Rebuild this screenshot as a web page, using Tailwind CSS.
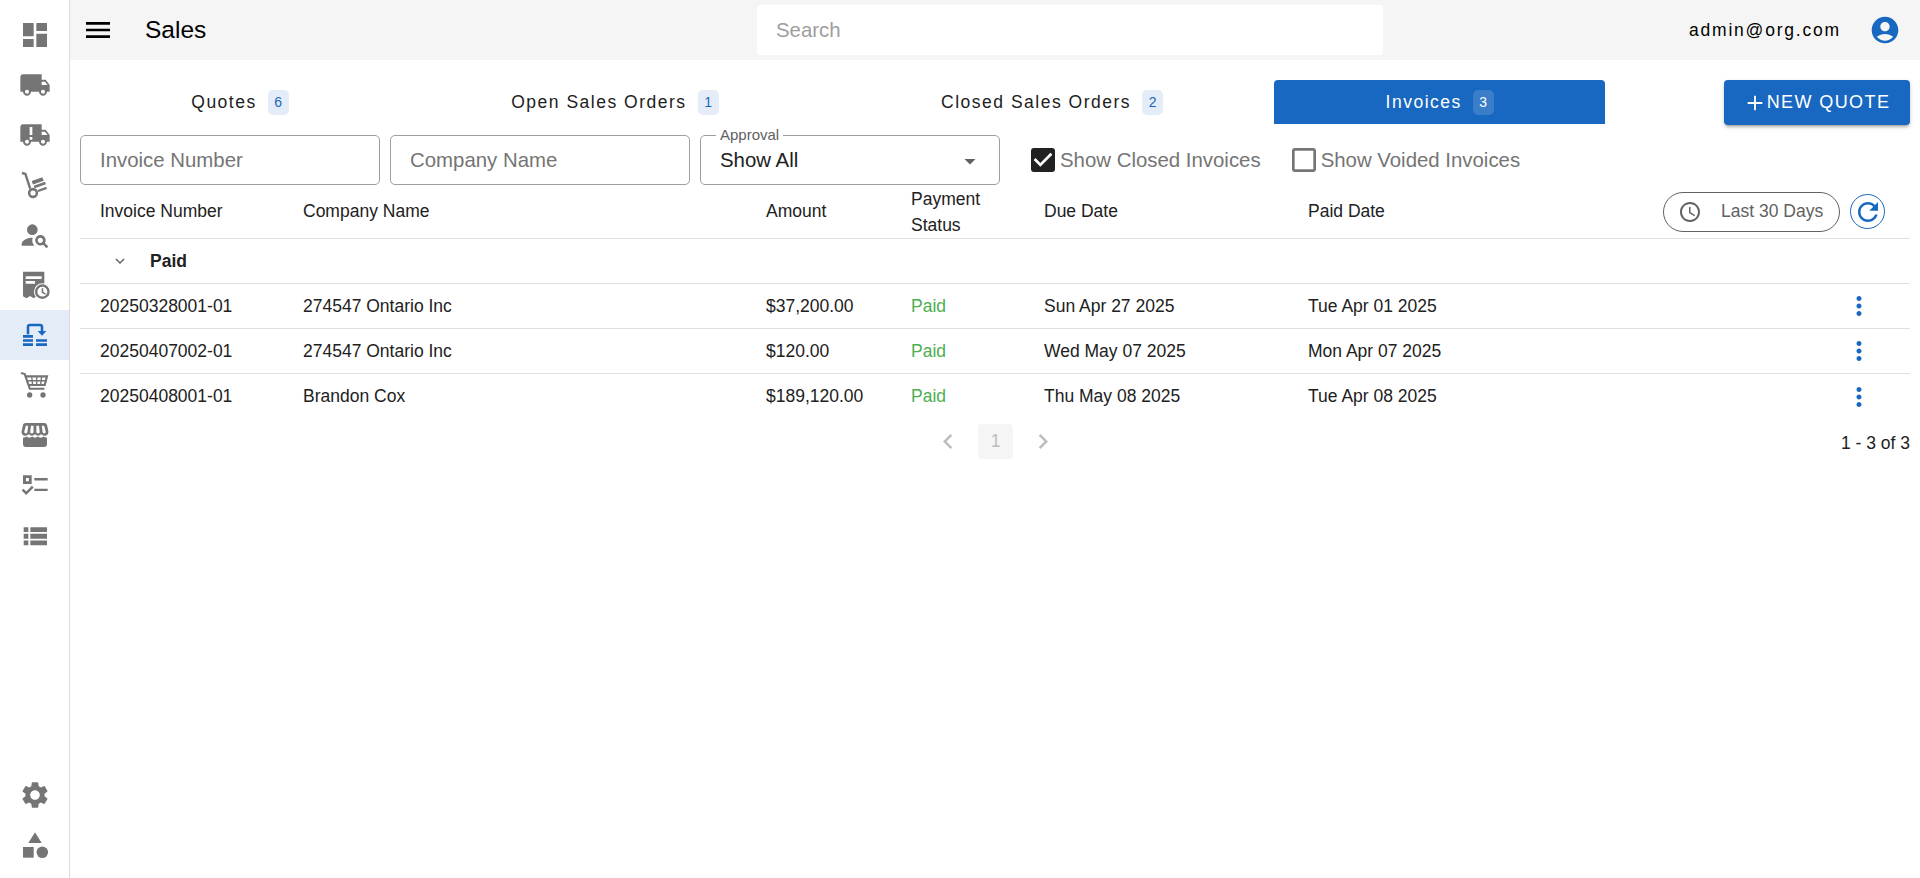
<!DOCTYPE html>
<html><head><meta charset="utf-8"><script src="https://cdn.jsdelivr.net/npm/@tailwindcss/browser@4"></script></head>
<body class="h-[878px] overflow-hidden bg-white font-['Liberation_Sans',sans-serif] text-[#212121]">
<div class="flex h-[878px]">
<nav class="w-[70px] shrink-0 border-r border-[#dcdcdc] flex flex-col justify-between pt-[10px] pb-[8px] text-[#757575]">
<div class="flex flex-col">
<div class="h-[50px] flex items-center justify-center"><svg class="w-8 h-8" viewBox="0 0 24 24" fill="currentColor"><path d="M3 13h8V3H3v10zm0 8h8v-6H3v6zm10 0h8V11h-8v10zm0-18v6h8V3h-8z"/></svg></div>
<div class="h-[50px] flex items-center justify-center"><svg class="w-8 h-8" viewBox="0 0 24 24" fill="currentColor"><path d="M20 8h-3V4H3c-1.100 0-2 .9-2 2v11h2c0 1.660 1.340 3 3 3s3-1.340 3-3h6c0 1.660 1.340 3 3 3s3-1.340 3-3h2v-5l-3-4zM6 18.500c-.83 0-1.500-.67-1.500-1.500s.67-1.500 1.500-1.500 1.500.67 1.500 1.500-.67 1.500-1.500 1.500zm13.500-9l1.960 2.500H17V9.500h2.500zm-1.500 9c-.83 0-1.500-.67-1.500-1.500s.67-1.500 1.500-1.500 1.500.67 1.500 1.500-.67 1.500-1.500 1.500z"/></svg></div>
<div class="h-[50px] flex items-center justify-center"><svg class="w-8 h-8" viewBox="0 0 24 24" fill="currentColor"><path fill-rule="evenodd" d="M20 8h-3V4H3c-1.100 0-2 .9-2 2v11h2c0 1.660 1.340 3 3 3s3-1.340 3-3h6c0 1.660 1.340 3 3 3s3-1.340 3-3h2v-5l-3-4zM6 18.500c-.83 0-1.500-.67-1.500-1.500s.67-1.500 1.500-1.500 1.500.67 1.500 1.500-.67 1.500-1.500 1.500zm13.500-9l1.960 2.500H17V9.500h2.500zm-1.500 9c-.83 0-1.500-.67-1.500-1.500s.67-1.500 1.500-1.500 1.500.67 1.500 1.500-.67 1.500-1.500 1.500zM8 6v6h2V6H8zm0 7.500v2h2v-2H8z"/></svg></div>
<div class="h-[50px] flex items-center justify-center"><svg class="w-8 h-8" viewBox="0 0 24 24" fill="currentColor"><path d="M2.200 3l2.600.7 3.600 11" fill="none" stroke="currentColor" stroke-width="1.800"/><circle cx="10.500" cy="18" r="2.900" fill="none" stroke="currentColor" stroke-width="1.900"/><path d="M14.500 17.300l6.500-2.300-.6-1.600-6.500 2.300zM9.500 9l8-2.900 1 2.700-8 2.900zM11 12.500l8.500-3 .7 2-8.500 3z"/></svg></div>
<div class="h-[50px] flex items-center justify-center"><svg class="w-8 h-8" viewBox="0 0 24 24" fill="currentColor"><circle cx="10" cy="8" r="4"/><path d="M10.350 14.010C7.620 13.910 2 15.270 2 19v1h9.540c-2.470-2.760-1.230-5.890-1.190-5.990z"/><path d="M19.430 18.020c.47-.8.7-1.770.51-2.800-.29-1.630-1.650-2.930-3.290-3.140-2.600-.33-4.790 1.860-4.460 4.460.21 1.640 1.510 3 3.140 3.290 1.030.19 2-.04 2.800-.51L20.590 22 22 20.590l-2.570-2.570zM16 18c-1.100 0-2-.9-2-2s.9-2 2-2 2 .9 2 2-.9 2-2 2z"/></svg></div>
<div class="h-[50px] flex items-center justify-center"><svg class="w-8 h-8" viewBox="0 0 24 24" fill="currentColor"><path fill-rule="evenodd" d="M3 2h16v19l-2.700 1-2.700-1.700-2.700 1.700-2.600-1.700-2.700 1.700L3 20.500zM5 5.500v2h12v-2zM5 9v2h7V9z"/><circle cx="17.500" cy="17" r="6.300" fill="#fff"/><path fill-rule="evenodd" d="M17.500 11.500a5.500 5.500 0 1 0 0 11 5.500 5.500 0 0 0 0-11zm0 1.800a3.700 3.700 0 1 1 0 7.400 3.700 3.700 0 0 1 0-7.400z"/><path d="M17 14.500h1.200v2.700l2 1.200-.6 1-2.600-1.600z"/></svg></div>
<div class="h-[50px] flex items-center justify-center bg-[#e3ecf7] w-[69px] text-[#1867c0]"><svg class="w-8 h-8" viewBox="0 0 24 24" fill="currentColor"><path d="M3 12h7.500v2H3zM3 15.100h7.500v2H3zM3 18.200h7.500v2H3zM12.750 15.100H21v2h-8.250zM12.750 18.200H21v2h-8.250z"/><path d="M6.750 11.500V6a1.500 1.500 0 0 1 1.500-1.500h7.500a1.500 1.500 0 0 1 1.500 1.500v3.500" fill="none" stroke="currentColor" stroke-width="1.900"/><path d="M14 9h6.500l-3.250 3.600z"/></svg></div>
<div class="h-[50px] flex items-center justify-center"><svg class="w-8 h-8" viewBox="0 0 24 24" fill="none" stroke="currentColor" stroke-width="1.600"><path d="M1.500 3l2.800 .8 3.800 11h11"/><path d="M5 5.500h16l-1.700 6.500H7" /><path d="M5.800 8.800h14.500M9.500 5.500l.7 6.500M13.300 5.500v6.500M17 5.500l-.8 6.500" stroke-width="1"/><circle cx="8" cy="19.500" r="2" fill="currentColor" stroke="none"/><circle cx="18" cy="19.500" r="2" fill="currentColor" stroke="none"/></svg></div>
<div class="h-[50px] flex items-center justify-center"><svg class="w-8 h-8" viewBox="0 0 24 24" fill="currentColor"><path fill-rule="evenodd" d="M5 3h14c1 0 1.800.6 2 1.500L22 9c.4 2-1 3.600-2.800 3.600-1.100 0-2-.5-2.600-1.300-.6.8-1.500 1.300-2.300 1.300-1 0-1.700-.5-2.300-1.300-.6.8-1.400 1.300-2.300 1.300-.9 0-1.700-.5-2.300-1.300-.6.8-1.500 1.300-2.600 1.300C2.900 12.600 1.600 11 2 9l1-4.500C3.200 3.600 4 3 5 3zM5.100 5L4 9.400c-.2.9.5 1.400 1.100 1.400.6 0 1.100-.5 1.200-1.100L6.900 5zM9 5l-.6 4.600c-.1.7.5 1.300 1.200 1.300.7 0 1.300-.6 1.300-1.300V5zM13 5v4.600c0 .7.6 1.300 1.300 1.300.7 0 1.300-.6 1.200-1.300L15 5zM17.100 5l.6 4.700c.1.6.6 1.100 1.200 1.100.6 0 1.300-.5 1.100-1.400L18.900 5z"/><path d="M3 14c1.200 0 1.900-.3 2.500-.8.6.5 1.500.8 2.100.8.8 0 1.800-.3 2.300-.8.6.5 1.300.8 2.100.8.8 0 1.500-.3 2.100-.8.6.5 1.500.8 2.300.8.7 0 1.500-.3 2.100-.8.6.5 1.300.8 2.500.8v5c0 1.100-.9 2-2 2H5c-1.100 0-2-.9-2-2z"/></svg></div>
<div class="h-[50px] flex items-center justify-center"><svg class="w-8 h-8 translate-y-[1px]" viewBox="0 0 24 24" fill="currentColor"><path fill-rule="evenodd" d="M3 4h6.500v6.500H3zM5.200 6v2.500h2.200V6z"/><path d="M11.500 6h10v1.800h-10zM11.500 14h10v1.800h-10zM2 15.400l1.300-1.300 2.100 2.100 4.300-4.300 1.300 1.300-5.600 5.600z"/></svg></div>
<div class="h-[50px] flex items-center justify-center"><svg class="w-8 h-8 translate-y-[1px]" viewBox="0 0 24 24" fill="currentColor"><path d="M3.500 14h3.500v-3.600H3.500zm0 5h3.500v-3.600H3.500zM3.500 9h3.500V5.400H3.500zm5 5H21v-3.600H8.500zm0 5H21v-3.600H8.500zM8.500 5.400V9H21V5.400z"/></svg></div>
</div>
<div class="flex flex-col">
<div class="h-[50px] flex items-center justify-center"><svg class="w-8 h-8" viewBox="0 0 24 24" fill="currentColor"><path d="M19.140 12.940c.04-.3.06-.61.06-.94 0-.32-.02-.64-.07-.94l2.030-1.580c.18-.14.23-.41.12-.61l-1.920-3.320c-.12-.22-.37-.29-.59-.22l-2.390.96c-.5-.38-1.030-.7-1.620-.94l-.36-2.540c-.04-.24-.24-.41-.48-.41h-3.840c-.24 0-.43.17-.47.41l-.36 2.540c-.59.24-1.130.57-1.620.94l-2.390-.96c-.22-.08-.47 0-.59.22L2.740 8.870c-.12.21-.08.47.12.61l2.030 1.580c-.05.3-.09.63-.09.94s.02.64.07.94l-2.030 1.580c-.18.14-.23.41-.12.61l1.920 3.320c.12.22.37.29.59.22l2.390-.96c.5.38 1.030.7 1.620.94l.36 2.540c.05.24.24.41.48.41h3.840c.24 0 .44-.17.47-.41l.36-2.540c.59-.24 1.130-.56 1.620-.94l2.390.96c.22.08.47 0 .59-.22l1.920-3.320c.12-.22.07-.47-.12-.61l-2.010-1.580zM12 15.600c-1.980 0-3.600-1.620-3.600-3.600s1.620-3.600 3.600-3.600 3.600 1.620 3.600 3.600-1.620 3.600-3.600 3.600z"/></svg></div>
<div class="h-[50px] flex items-center justify-center"><svg class="w-8 h-8" viewBox="0 0 24 24" fill="currentColor"><path d="M12 2.500l-5 8h10z"/><circle cx="17.500" cy="17.500" r="4.300"/><rect x="3" y="13.500" width="8" height="8"/></svg></div>
</div>
</nav>
<div class="flex-1 min-w-0 flex flex-col">
<header class="h-[60px] bg-[#f5f5f5] flex items-center relative">
<svg class="w-8 h-8 ml-[12px] text-black" viewBox="0 0 24 24" fill="currentColor"><path d="M3 18h18v-2H3v2zm0-5h18v-2H3v2zm0-7v2h18V6H3z"/></svg>
<h1 class="ml-[31px] text-[24.500px] leading-none text-black">Sales</h1>
<div class="absolute left-[687px] top-[5px] w-[626px] h-[50px] bg-white rounded-[4px] flex items-center pl-[19px] text-[20.400px] text-[#9e9e9e]">Search</div>
<div class="ml-auto text-[17.500px] tracking-[1.800px] text-black">admin@org.com</div>
<svg class="w-8 h-8 ml-[28px] mr-[19px] text-[#1867c0]" viewBox="0 0 24 24" fill="currentColor"><path d="M12 2C6.480 2 2 6.480 2 12s4.480 10 10 10 10-4.480 10-10S17.520 2 12 2zm0 4c1.930 0 3.500 1.570 3.500 3.500S13.930 13 12 13s-3.500-1.570-3.500-3.500S10.070 6 12 6zm0 14c-2.030 0-4.430-.82-6.140-2.880C7.550 15.800 9.680 15 12 15s4.450.8 6.140 2.120C16.430 19.180 14.030 20 12 20z"/></svg>
</header>
<main class="pl-[10px] pr-[10px] flex-1 flex flex-col">
<div class="flex items-start pt-[20px]">
<div class="flex w-[1525px] h-[44px] text-[17.500px] tracking-[1.500px]">
<div class="flex-auto flex items-center justify-center gap-[11px]">Quotes <span class="w-[21px] h-[25px] rounded-[5px] bg-[#e3ecf7] text-[#1867c0] text-[14px] tracking-normal flex items-center justify-center">6</span></div>
<div class="flex-auto flex items-center justify-center gap-[11px]">Open Sales Orders <span class="w-[21px] h-[25px] rounded-[5px] bg-[#e3ecf7] text-[#1867c0] text-[14px] tracking-normal flex items-center justify-center">1</span></div>
<div class="flex-auto flex items-center justify-center gap-[11px]">Closed Sales Orders <span class="w-[21px] h-[25px] rounded-[5px] bg-[#e3ecf7] text-[#1867c0] text-[14px] tracking-normal flex items-center justify-center">2</span></div>
<div class="flex-auto flex items-center justify-center gap-[11px] bg-[#1867c0] text-white rounded-t-[4px]">Invoices <span class="w-[21px] h-[25px] rounded-[5px] bg-white/15 text-white text-[14px] tracking-normal flex items-center justify-center">3</span></div>
</div>
<button class="ml-auto w-[186px] h-[45px] bg-[#1867c0] text-white rounded-[4px] text-[18px] tracking-[1.400px] flex items-center justify-center shadow-[0_3px_3px_-2px_rgba(0,0,0,.3),0_2px_4px_rgba(0,0,0,.2)]"><svg class="w-[22px] h-[22px] mr-[1px]" viewBox="0 0 24 24" fill="currentColor"><path d="M20 13h-7v7h-2v-7H4v-2h7V4h2v7h7v2z"/></svg>NEW QUOTE</button>
</div>
<div class="flex items-center mt-[10px] gap-[10px] h-[50px]">
<div class="w-[300px] h-[50px] border border-[#9e9e9e] rounded-[5px] flex items-center pl-[19px] text-[20.400px] text-[#757575]">Invoice Number</div>
<div class="w-[300px] h-[50px] border border-[#9e9e9e] rounded-[5px] flex items-center pl-[19px] text-[20.400px] text-[#757575]">Company Name</div>
<div class="relative w-[300px] h-[50px] border border-[#9e9e9e] rounded-[5px] flex items-center pl-[19px] text-[20.400px]">Show All
<span class="absolute left-[15px] -top-[9px] bg-white px-[4px] text-[15px] leading-[16px] text-[#616161]">Approval</span>
<svg class="absolute right-[17px] top-[13px] w-6 h-6 text-[#616161]" viewBox="0 0 24 24" fill="currentColor"><path d="M6.500 10l5.500 5.500 5.500-5.500z"/></svg></div>
<div class="flex items-center ml-[17px] text-[20.400px] text-[#757575]"><svg class="w-8 h-8 text-[#212121]" viewBox="0 0 24 24" fill="currentColor"><path d="M19 3H5c-1.110 0-2 .9-2 2v14c0 1.100.89 2 2 2h14c1.110 0 2-.9 2-2V5c0-1.100-.89-2-2-2zm-9 14l-5-5 1.410-1.410L10 14.170l7.590-7.590L19 8l-9 9z"/></svg><span class="ml-[1px]">Show Closed Invoices</span></div>
<div class="flex items-center ml-[17px] text-[20.400px] text-[#757575]"><svg class="w-8 h-8" viewBox="0 0 24 24" fill="currentColor"><path d="M19 5v14H5V5h14m0-2H5c-1.100 0-2 .9-2 2v14c0 1.100.9 2 2 2h14c1.100 0 2-.9 2-2V5c0-1.100-.9-2-2-2z"/></svg><span class="ml-[1px]">Show Voided Invoices</span></div>
</div>
<div class="text-[17.500px] text-[#212121]">
<div class="grid grid-cols-[203px_463px_145px_133px_264px_1fr] h-[54px] border-b border-[#e0e0e0] items-center">
<div class="pl-5">Invoice Number</div><div class="pl-5">Company Name</div><div class="pl-5">Amount</div><div class="pl-5 leading-[26px]">Payment Status</div><div class="pl-5">Due Date</div>
<div class="pl-5 flex items-center justify-between"><span>Paid Date</span>
<span class="flex items-center mr-[25px]"><span class="w-[177px] h-[40px] border border-[#616161] rounded-full flex items-center pl-[14px] text-[#616161]"><svg class="w-6 h-6" viewBox="0 0 24 24" fill="currentColor"><path d="M11.990 2C6.470 2 2 6.480 2 12s4.470 10 9.990 10C17.520 22 22 17.520 22 12S17.520 2 11.990 2zM12 20c-4.420 0-8-3.580-8-8s3.580-8 8-8 8 3.580 8 8-3.580 8-8 8zM12.500 7H11v6l5.250 3.150.75-1.230-4.500-2.670z"/></svg><span class="ml-[19px]">Last 30 Days</span></span>
<span class="ml-[10px] w-[35px] h-[35px] border border-[#1867c0] rounded-full flex items-center justify-center text-[#1867c0]"><svg class="w-[30px] h-[30px]" viewBox="0 0 24 24" fill="currentColor"><path d="M17.650 6.350C16.200 4.900 14.210 4 12 4c-4.420 0-7.990 3.580-7.990 8s3.570 8 7.990 8c3.730 0 6.840-2.550 7.730-6h-2.080c-.82 2.330-3.040 4-5.650 4-3.310 0-6-2.690-6-6s2.690-6 6-6c1.660 0 3.140.69 4.220 1.780L13 11h7V4l-2.350 2.350z"/></svg></span></span></div>
</div>
<div class="h-[45px] border-b border-[#e0e0e0] flex items-center font-bold"><svg class="w-[14px] h-[14px] ml-[33px] text-[#616161]" viewBox="0 0 24 24" fill="none" stroke="currentColor" stroke-width="2.500"><path d="M5 8.500l7 7 7-7"/></svg><span class="ml-[23px]">Paid</span></div>
<div class="grid grid-cols-[203px_463px_145px_133px_264px_1fr] h-[45px] border-b border-[#e0e0e0] items-center"><div class="pl-5">20250328001-01</div><div class="pl-5">274547 Ontario Inc</div><div class="pl-5">$37,200.00</div><div class="pl-5 text-[#4caf50]">Paid</div><div class="pl-5">Sun Apr 27 2025</div><div class="pl-5 flex justify-between items-center"><span>Tue Apr 01 2025</span><svg class="w-[30px] h-[30px] mr-[36px] text-[#1867c0]" viewBox="0 0 24 24" fill="currentColor"><path d="M12 8c1.100 0 2-.9 2-2s-.9-2-2-2-2 .9-2 2 .9 2 2 2zm0 2c-1.100 0-2 .9-2 2s.9 2 2 2 2-.9 2-2-.9-2-2-2zm0 6c-1.100 0-2 .9-2 2s.9 2 2 2 2-.9 2-2-.9-2-2-2z"/></svg></div></div>
<div class="grid grid-cols-[203px_463px_145px_133px_264px_1fr] h-[45px] border-b border-[#e0e0e0] items-center"><div class="pl-5">20250407002-01</div><div class="pl-5">274547 Ontario Inc</div><div class="pl-5">$120.00</div><div class="pl-5 text-[#4caf50]">Paid</div><div class="pl-5">Wed May 07 2025</div><div class="pl-5 flex justify-between items-center"><span>Mon Apr 07 2025</span><svg class="w-[30px] h-[30px] mr-[36px] text-[#1867c0]" viewBox="0 0 24 24" fill="currentColor"><path d="M12 8c1.100 0 2-.9 2-2s-.9-2-2-2-2 .9-2 2 .9 2 2 2zm0 2c-1.100 0-2 .9-2 2s.9 2 2 2 2-.9 2-2-.9-2-2-2zm0 6c-1.100 0-2 .9-2 2s.9 2 2 2 2-.9 2-2-.9-2-2-2z"/></svg></div></div>
<div class="grid grid-cols-[203px_463px_145px_133px_264px_1fr] h-[45px] items-center"><div class="pl-5">20250408001-01</div><div class="pl-5">Brandon Cox</div><div class="pl-5">$189,120.00</div><div class="pl-5 text-[#4caf50]">Paid</div><div class="pl-5">Thu May 08 2025</div><div class="pl-5 flex justify-between items-center"><span>Tue Apr 08 2025</span><svg class="w-[30px] h-[30px] mr-[36px] text-[#1867c0]" viewBox="0 0 24 24" fill="currentColor"><path d="M12 8c1.100 0 2-.9 2-2s-.9-2-2-2-2 .9-2 2 .9 2 2 2zm0 2c-1.100 0-2 .9-2 2s.9 2 2 2 2-.9 2-2-.9-2-2-2zm0 6c-1.100 0-2 .9-2 2s.9 2 2 2 2-.9 2-2-.9-2-2-2z"/></svg></div></div>
<div class="relative h-[46px] flex items-center justify-end"><div class="absolute left-[853px] top-[5px] flex items-center gap-[15px] text-[#bdbdbd]"><svg class="w-[30px] h-[35px]" viewBox="0 0 24 24" fill="currentColor"><path d="M15.410 7.410L14 6l-6 6 6 6 1.410-1.410L10.830 12z"/></svg><span class="w-[35px] h-[35px] bg-[#f5f5f5] rounded-[4px] flex items-center justify-center">1</span><svg class="w-[30px] h-[35px]" viewBox="0 0 24 24" fill="currentColor"><path d="M10 6L8.590 7.410 13.170 12l-4.580 4.590L10 18l6-6z"/></svg></div><span class="translate-y-[1px]">1 - 3 of 3</span></div>
</div>
</main>
</div>
</div>
</body></html>
